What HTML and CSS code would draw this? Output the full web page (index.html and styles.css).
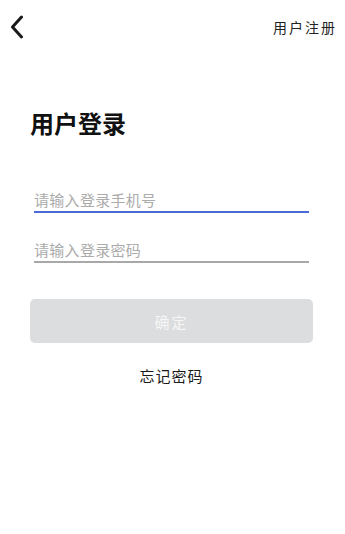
FILE: index.html
```html
<!DOCTYPE html>
<html lang="zh-CN">
<head>
    <meta charset="UTF-8">
    <meta name="viewport" content="width=device-width, initial-scale=1.0">
    <title>用户登录</title>
    <link rel="stylesheet" href="styles.css">
</head>
<body>
    <header class="top-bar">
        <span class="back">
            <svg width="14" height="24" viewBox="0 0 14 24">
                <polyline points="11.5,2 2.5,12 11.5,22" fill="none" stroke="#1a1a1a" stroke-width="3" stroke-linecap="round" stroke-linejoin="round"/>
            </svg>
        </span>
        <span class="register">用户注册</span>
    </header>

    <!-- Login form -->
    <main class="login">
        <h1 class="title">用户登录</h1>
        <div class="field active">
            <input type="text" placeholder="请输入登录手机号">
        </div>
        <div class="field">
            <input type="password" placeholder="请输入登录密码">
        </div>
        <button class="submit">确定</button>
        <p class="forgot">忘记密码</p>
    </main>
</body>
</html>
```

FILE: styles.css
```css
body {
    margin: 0;
    padding: 0;
    background: #fff;
    color: #1a1a1a;
    font-family: "Noto Sans CJK SC", "Noto Sans", sans-serif;
}

.top-bar {
    display: flex;
    justify-content: space-between;
    align-items: center;
    height: 54px;
    padding: 0 10px 0 10px;
}

.back {
    display: flex;
}

.register {
    font-size: 14px;
    letter-spacing: 2px;
    margin-right: -2px;
    color: #222;
}

.login {
    padding: 0 36px 0 34px;
}

.title {
    margin: 56px 0 0 -4px;
    font-size: 24px;
    line-height: 26px;
    font-weight: bold;
    color: #111;
}

.field {
    border-bottom: 2px solid #a8a8a8;
    margin-top: 26px;
}

.login .title + .field {
    margin-top: 53px;
}

.field.active {
    border-bottom-color: #4a6ad9;
}

.field input {
    display: block;
    width: 100%;
    box-sizing: border-box;
    border: none;
    outline: none;
    padding: 0 0 2px 0;
    height: 22px;
    line-height: 20px;
    font-size: 15px;
    letter-spacing: 0.3px;
    font-family: inherit;
    background: transparent;
}

.field input::placeholder {
    color: #ababab;
}

.submit {
    display: block;
    width: 283px;
    height: 44px;
    margin: 36px 0 0 -4px;
    border: none;
    border-radius: 5px;
    background: #dcdddf;
    color: #f6f6f6;
    font-size: 15px;
    letter-spacing: 2px;
    font-family: inherit;
}

.forgot {
    margin: 23px 0 0 -4px;
    width: 283px;
    text-align: center;
    font-size: 15px;
    line-height: 20px;
    letter-spacing: 1px;
    color: #1a1a1a;
}
```
